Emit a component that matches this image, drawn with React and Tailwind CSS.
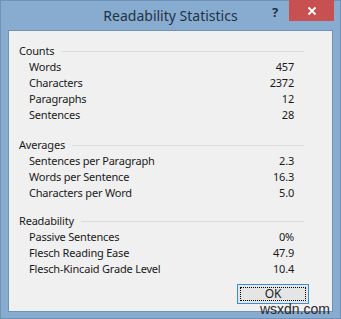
import React from "react";

const sections = [
  {
    title: "Counts",
    gap: "mt-0",
    rows: [
      ["Words", "457"],
      ["Characters", "2372"],
      ["Paragraphs", "12"],
      ["Sentences", "28"],
    ],
  },
  {
    title: "Averages",
    gap: "mt-[14px]",
    rows: [
      ["Sentences per Paragraph", "2.3"],
      ["Words per Sentence", "16.3"],
      ["Characters per Word", "5.0"],
    ],
  },
  {
    title: "Readability",
    gap: "mt-[12px]",
    rows: [
      ["Passive Sentences", "0%"],
      ["Flesch Reading Ease", "47.9"],
      ["Flesch-Kincaid Grade Level", "10.4"],
    ],
  },
];

function Section({ title, rows, gap }) {
  return (
    <div className={`flex flex-col ${gap}`}>
      {/* heading with the etched line */}
      <div className="flex items-center h-4 pr-[28px]">
        <span>{title}</span>
        <div className="flex-1 ml-[7px] h-px bg-[#dcdcdc]" />
      </div>
      {rows.map(([label, value]) => (
        <div key={label} className="flex justify-between h-4 pl-[10px] pr-[38px] items-center">
          <span>{label}</span>
          <span>{value}</span>
        </div>
      ))}
    </div>
  );
}

export default function App() {
  return (
    <div
      className="relative w-[341px] h-[319px] bg-[#88abd0] border border-[#6f93b8] flex flex-col text-[11px] tracking-[-0.2px] text-[#1a1a1a]"
      style={{ fontFamily: "'Noto Sans', 'Open Sans', sans-serif" }}
    >
      {/* Title bar */}
      <div className="relative h-[29px] flex items-center justify-center shrink-0">
        <span className="text-[14px] tracking-normal text-[#1f3347] -mt-[1px]">Readability Statistics</span>
        <span className="absolute left-[271px] top-[2px] text-[13px] font-bold text-[#1f3347]">?</span>
        <div className="absolute right-[6px] -top-px w-[45px] h-[21px] bg-[#c75050] flex items-center justify-center">
          <svg width="10" height="10" viewBox="0 0 10 10">
            <path d="M1.5 1.5 L8.5 8.5 M8.5 1.5 L1.5 8.5" stroke="#fff" strokeWidth="1.8" />
          </svg>
        </div>
      </div>

      {/* Body panel */}
      <div className="mx-[7px] mb-[6px] flex-1 bg-[#f0f0f0] border border-[#6f93b8] pl-[10px] pt-[12px] flex flex-col">
        {sections.map((s) => (
          <Section key={s.title} {...s} />
        ))}
        <div className="flex justify-end pr-[23px] mt-[7px]">
          <button className="w-[72px] h-[20px] border border-[#3c8ed8] bg-[#e5e5e5] p-[2px] flex">
            <span className="flex-1 border border-dotted border-black flex items-center justify-center leading-none text-[12px]">
              OK
            </span>
          </button>
        </div>
      </div>

      {/* watermark */}
      <span
        className="absolute right-[10px] bottom-[2px] text-[14px] tracking-normal text-[#2a2a2a] leading-none"
        style={{ fontFamily: "'Liberation Sans', Arial, sans-serif" }}
      >
        wsxdn.com
      </span>
    </div>
  );
}
